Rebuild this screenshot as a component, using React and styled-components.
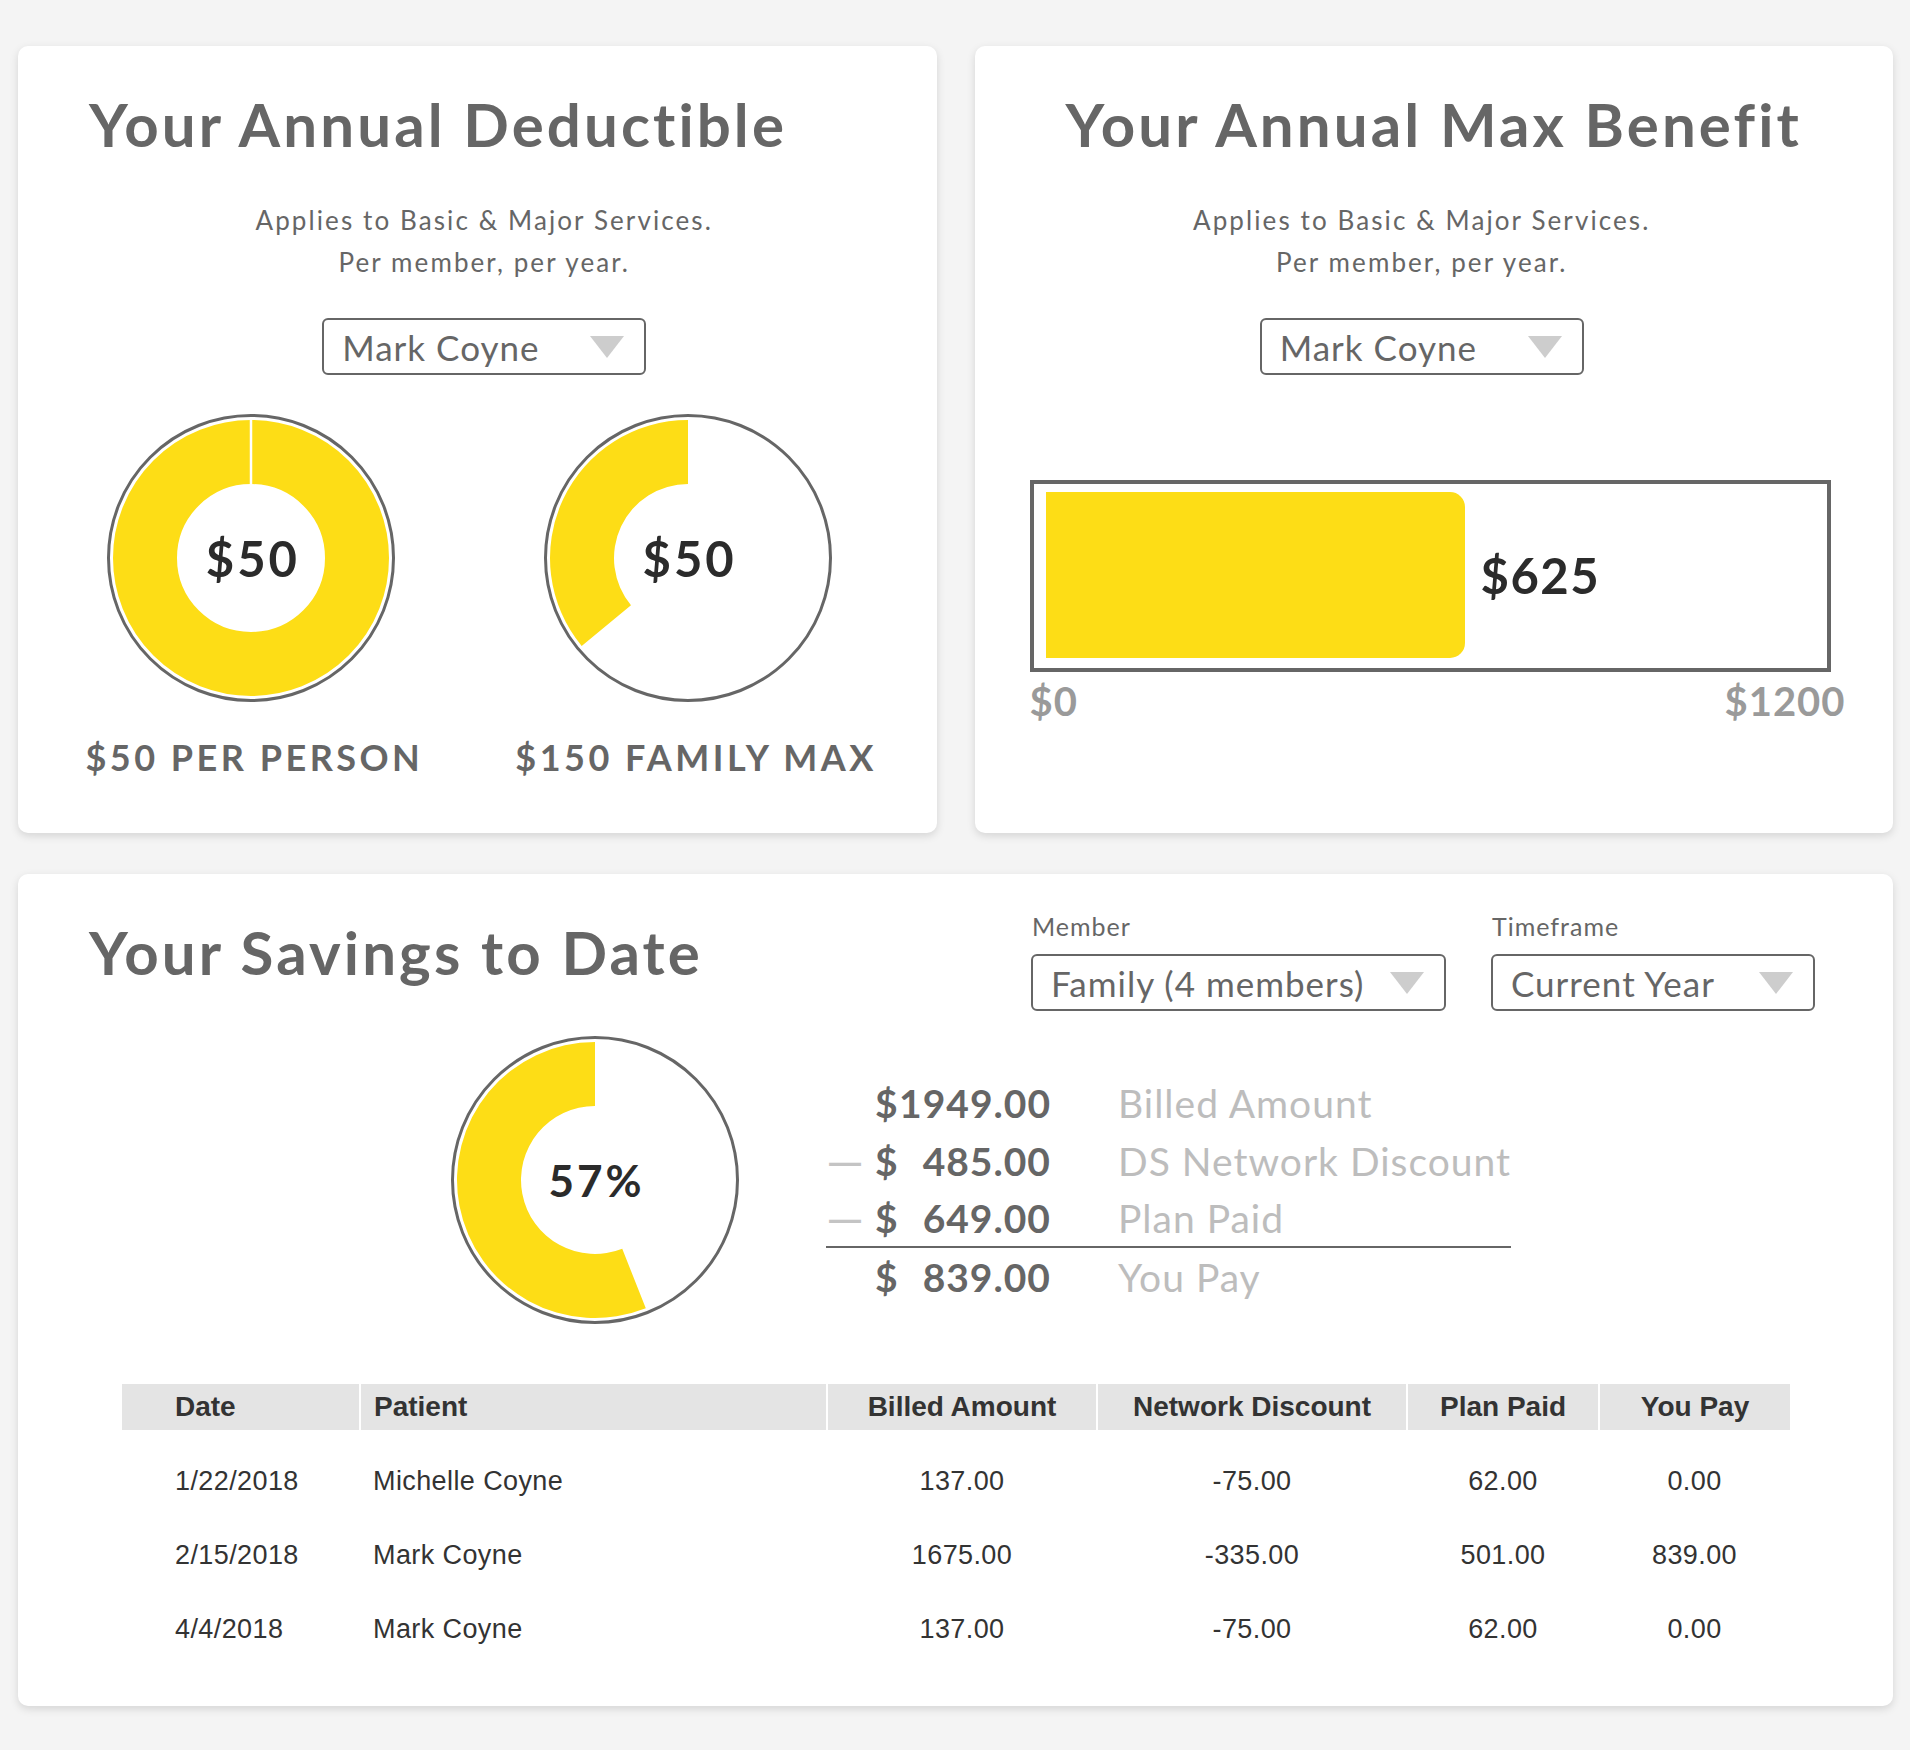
import React from "react";
import styled, { createGlobalStyle } from "styled-components";

const YELLOW = "#fddd16";

const GlobalStyle = createGlobalStyle`
  html, body { margin: 0; padding: 0; background: #f4f4f4; }
  body { font-family: "Lato", "Liberation Sans", sans-serif; color: #666; }
  * { box-sizing: border-box; }
`;

const Page = styled.div`
  width: 1910px;
  padding: 46px 17px 44px 18px;
  display: flex;
  flex-direction: column;
  gap: 41px;
`;

const TopRow = styled.div`
  display: grid;
  grid-template-columns: 1fr 1fr;
  gap: 38px;
`;

const Card = styled.section`
  background: #fff;
  border-radius: 10px;
  box-shadow: 0 3px 8px rgba(0, 0, 0, 0.13);
  display: flex;
  flex-direction: column;
  align-items: ${(p) => (p.$center ? "center" : "stretch")};
  padding: ${(p) => p.$pad || "42px 0 55px"};
`;

const Title = styled.h1`
  margin: 0;
  font-family: "Lato", sans-serif;
  font-weight: 700;
  font-size: 60px;
  line-height: 72px;
  letter-spacing: 3.1px;
  color: #666;
  text-align: ${(p) => (p.$center ? "center" : "left")};
  padding-left: ${(p) => (p.$center ? "0" : "71px")};
  align-self: stretch;
`;

const Intro = styled.div`
  display: flex;
  flex-direction: column;
  align-items: center;
  transform: translateX(${(p) => p.$shift || 0}px);
`;

const Subtitle = styled.p`
  margin: 39px 0 0;
  font-size: 26px;
  line-height: 42px;
  letter-spacing: 2.1px;
  color: #666;
  text-align: center;
`;

const SelectBox = styled.div`
  width: ${(p) => p.$w}px;
  height: 57px;
  margin-top: ${(p) => p.$mt || 0}px;
  border: 2px solid #666;
  border-radius: 6px;
  display: flex;
  align-items: center;
  justify-content: space-between;
  padding: 0 20px 0 18px;
  font-size: 35px;
  letter-spacing: 1px;
  color: #666;
  background: #fff;
`;

const Caret = styled.span`
  width: 0;
  height: 0;
  border-left: 17px solid transparent;
  border-right: 17px solid transparent;
  border-top: 22px solid #cdcdcd;
`;

const Select = ({ value, width, mt }) => (
  <SelectBox $w={width} $mt={mt}>
    <span>{value}</span>
    <Caret />
  </SelectBox>
);

const DonutRow = styled.div`
  align-self: stretch;
  margin-top: 38px;
  padding: 0 30px 0 15px;
  display: grid;
  grid-template-columns: 1fr 1fr;
`;

const DonutCol = styled.div`
  display: flex;
  flex-direction: column;
  align-items: center;
`;

const DonutWrap = styled.div`
  position: relative;
  width: 290px;
  height: 290px;
  flex: none;
`;

const DonutValue = styled.div`
  position: absolute;
  inset: 0;
  display: flex;
  align-items: center;
  justify-content: center;
  font-weight: 700;
  font-size: ${(p) => p.$size}px;
  letter-spacing: 3px;
  padding-left: 3px;
  color: #2b2b2b;
`;

const DonutLabel = styled.div`
  margin-top: 33px;
  font-weight: 700;
  font-size: 36px;
  line-height: 42px;
  letter-spacing: 3.5px;
  color: #666;
  white-space: nowrap;
  transform: translateX(${(p) => p.$shift || 0}px);
`;

const Donut = ({ fraction, value, valueSize = 49 }) => {
  const c = 145;
  const rO = 138;
  const rI = 74;
  let shape;
  if (fraction >= 1) {
    shape = (
      <>
        <circle cx={c} cy={c} r={(rO + rI) / 2} fill="none" stroke={YELLOW} strokeWidth={rO - rI} />
        <line x1={c} y1={c - rO - 1} x2={c} y2={c - rI + 1} stroke="#fff" strokeWidth="2.5" />
      </>
    );
  } else {
    const t = fraction * 2 * Math.PI;
    const large = fraction > 0.5 ? 1 : 0;
    const xo = c - rO * Math.sin(t);
    const yo = c - rO * Math.cos(t);
    const xi = c - rI * Math.sin(t);
    const yi = c - rI * Math.cos(t);
    const d = `M ${c} ${c - rO} A ${rO} ${rO} 0 ${large} 0 ${xo} ${yo} L ${xi} ${yi} A ${rI} ${rI} 0 ${large} 1 ${c} ${c - rI} Z`;
    shape = <path d={d} fill={YELLOW} />;
  }
  return (
    <DonutWrap>
      <svg width="290" height="290" viewBox="0 0 290 290">
        <circle cx={c} cy={c} r="142.5" fill="#fff" stroke="#666" strokeWidth="3" />
        {shape}
      </svg>
      <DonutValue $size={valueSize}>{value}</DonutValue>
    </DonutWrap>
  );
};

/* ---------- Max benefit bar ---------- */
const BarSection = styled.div`
  align-self: flex-start;
  margin: 105px 0 0 55px;
`;

const BarBox = styled.div`
  width: 801px;
  height: 192px;
  border: 4px solid #666;
  padding: 8px 0 10px 12px;
  display: flex;
  align-items: center;
`;

const BarFill = styled.div`
  height: 100%;
  background: ${YELLOW};
  border-radius: 0 15px 15px 0;
  flex: none;
`;

const BarValue = styled.div`
  margin-left: 16px;
  font-weight: 700;
  font-size: 49px;
  letter-spacing: 1.5px;
  color: #2b2b2b;
`;

const Axis = styled.div`
  width: 816px;
  margin-top: 5px;
  display: flex;
  justify-content: space-between;
  font-weight: 700;
  font-size: 40px;
  line-height: 48px;
  letter-spacing: 1px;
  color: #9a9a9a;
`;

/* ---------- Savings ---------- */
const SavingsHeader = styled.div`
  display: flex;
  justify-content: space-between;
  align-items: flex-start;
  padding-right: 78px;
`;

const Filters = styled.div`
  display: flex;
  gap: 45px;
`;

const Filter = styled.div`
  display: flex;
  flex-direction: column;
  gap: 13px;
`;

const FilterLabel = styled.div`
  font-size: 25px;
  line-height: 30px;
  letter-spacing: 1px;
  color: #666;
  padding-left: 1px;
`;

const SummaryRow = styled.div`
  margin-top: 24px;
  display: flex;
  justify-content: center;
  align-items: flex-start;
  gap: 86px;
  padding-left: 50px;
`;

const Summary = styled.div`
  margin-top: 39px;
  display: flex;
  flex-direction: column;
`;

const SumLine = styled.div`
  display: flex;
  align-items: center;
  height: 58px;
  border-bottom: ${(p) => (p.$rule ? "2px solid #666" : "none")};
`;

const Dash = styled.span`
  width: 49px;
  flex: none;
  font-size: 48px;
  line-height: 1;
  color: #c4c4c4;
`;

const Amount = styled.span`
  width: 176px;
  flex: none;
  display: flex;
  justify-content: space-between;
  font-weight: 700;
  font-size: 39px;
  letter-spacing: 1px;
  color: #666;
`;

const SumLabel = styled.span`
  padding-left: 67px;
  font-size: 39px;
  letter-spacing: 1px;
  color: #bdbdbd;
  white-space: nowrap;
`;

const Table = styled.table`
  margin: 59px 104px 0;
  width: 1668px;
  border-collapse: collapse;
  table-layout: fixed;
  font-family: "Liberation Sans", Arial, sans-serif;
  color: #333;
`;

const Th = styled.th`
  height: 46px;
  padding: 0 0 0 ${(p) => p.$pl || 0}px;
  background: #e4e4e4;
  border-left: ${(p) => (p.$first ? "none" : "2px solid #fff")};
  font-size: 28px;
  font-weight: 700;
  text-align: ${(p) => p.$align || "center"};
`;

const Td = styled.td`
  height: 74px;
  padding: 0 0 0 ${(p) => p.$pl || 0}px;
  font-size: 27px;
  letter-spacing: 0.4px;
  text-align: ${(p) => p.$align || "center"};
  vertical-align: middle;
  tr:first-child > & {
    height: 88px;
    padding-top: 14px;
  }
`;

const cols = [
  { key: "date", label: "Date", w: 238, align: "left", pl: 53 },
  { key: "patient", label: "Patient", w: 467, align: "left", pl: 13 },
  { key: "billed", label: "Billed Amount", w: 270 },
  { key: "disc", label: "Network Discount", w: 310 },
  { key: "plan", label: "Plan Paid", w: 192 },
  { key: "you", label: "You Pay", w: 191 },
];

const rows = [
  { date: "1/22/2018", patient: "Michelle Coyne", billed: "137.00", disc: "-75.00", plan: "62.00", you: "0.00" },
  { date: "2/15/2018", patient: "Mark Coyne", billed: "1675.00", disc: "-335.00", plan: "501.00", you: "839.00" },
  { date: "4/4/2018", patient: "Mark Coyne", billed: "137.00", disc: "-75.00", plan: "62.00", you: "0.00" },
];

const summary = [
  { dash: false, cur: "$", num: "1949.00", label: "Billed Amount" },
  { dash: true, cur: "$", num: "485.00", label: "DS Network Discount" },
  { dash: true, cur: "$", num: "649.00", label: "Plan Paid", rule: true },
  { dash: false, cur: "$", num: "839.00", label: "You Pay" },
];

export default function App() {
  const barMax = 1200;
  const barVal = 625;
  const barInner = 805;
  return (
    <>
      <GlobalStyle />
      <Page>
        <TopRow>
          <Card $center>
            <Title>Your Annual Deductible</Title>
            <Intro $shift={7}>
              <Subtitle>
                Applies to Basic &amp; Major Services.
                <br />
                Per member, per year.
              </Subtitle>
              <Select value="Mark Coyne" width={324} mt={35} />
            </Intro>
            <DonutRow>
              <DonutCol>
                <Donut fraction={1} value="$50" />
                <DonutLabel $shift={3}>$50 PER PERSON</DonutLabel>
              </DonutCol>
              <DonutCol>
                <Donut fraction={0.36} value="$50" />
                <DonutLabel $shift={8}>$150 FAMILY MAX</DonutLabel>
              </DonutCol>
            </DonutRow>
          </Card>
          <Card $center>
            <Title $center>Your Annual Max Benefit</Title>
            <Intro $shift={-12}>
              <Subtitle>
                Applies to Basic &amp; Major Services.
                <br />
                Per member, per year.
              </Subtitle>
              <Select value="Mark Coyne" width={324} mt={35} />
            </Intro>
            <BarSection>
              <BarBox>
                <BarFill style={{ width: `${Math.round((barVal / barMax) * barInner)}px` }} />
                <BarValue>$625</BarValue>
              </BarBox>
              <Axis>
                <span>$0</span>
                <span>$1200</span>
              </Axis>
            </BarSection>
          </Card>
        </TopRow>

        <Card $pad="37px 0 40px">
          <SavingsHeader>
            <Title style={{ marginTop: 5 }}>Your Savings to Date</Title>
            <Filters>
              <Filter>
                <FilterLabel>Member</FilterLabel>
                <Select value="Family (4 members)" width={415} />
              </Filter>
              <Filter>
                <FilterLabel>Timeframe</FilterLabel>
                <Select value="Current Year" width={324} />
              </Filter>
            </Filters>
          </SavingsHeader>

          <SummaryRow>
            <Donut fraction={0.56} value="57%" valueSize={44} />
            <Summary>
              {summary.map((s) => (
                <SumLine key={s.label} $rule={s.rule}>
                  <Dash>{s.dash ? "—" : ""}</Dash>
                  <Amount>
                    <span>{s.cur}</span>
                    <span>{s.num}</span>
                  </Amount>
                  <SumLabel>{s.label}</SumLabel>
                </SumLine>
              ))}
            </Summary>
          </SummaryRow>

          <Table>
            <colgroup>
              {cols.map((c) => (
                <col key={c.key} style={{ width: c.w }} />
              ))}
            </colgroup>
            <thead>
              <tr>
                {cols.map((c, i) => (
                  <Th key={c.key} $first={i === 0} $align={c.align} $pl={c.pl}>
                    {c.label}
                  </Th>
                ))}
              </tr>
            </thead>
            <tbody>
              {rows.map((r, ri) => (
                <tr key={ri}>
                  {cols.map((c) => (
                    <Td key={c.key} $align={c.align} $pl={c.pl}>
                      {r[c.key]}
                    </Td>
                  ))}
                </tr>
              ))}
            </tbody>
          </Table>
        </Card>
      </Page>
    </>
  );
}
